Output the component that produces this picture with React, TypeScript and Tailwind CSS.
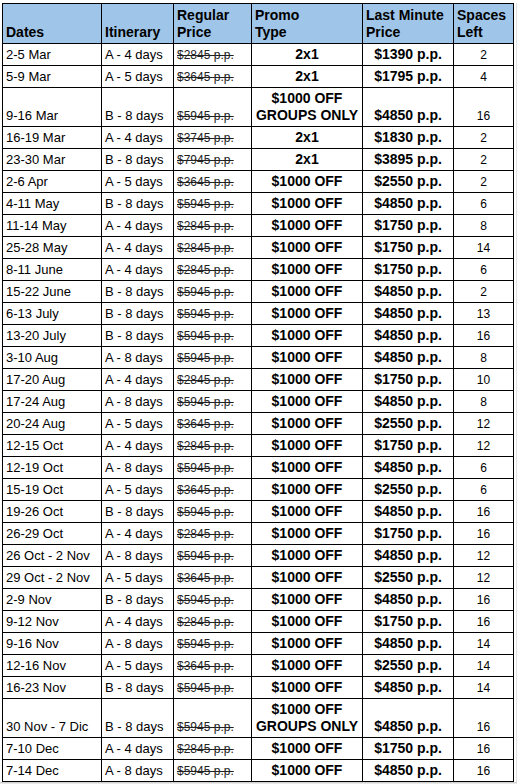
import React from "react";

type Row = {
  d: string;
  it: string;
  reg: string;
  promo: string;
  last: string;
  sp: string;
  tall?: boolean;
};

const rows: Row[] = [
  { d: "2-5 Mar", it: "A - 4 days", reg: "$2845 p.p.", promo: "2x1", last: "$1390 p.p.", sp: "2" },
  { d: "5-9 Mar", it: "A - 5 days", reg: "$3645 p.p.", promo: "2x1", last: "$1795 p.p.", sp: "4" },
  { d: "9-16 Mar", it: "B - 8 days", reg: "$5945 p.p.", promo: "GROUPS", last: "$4850 p.p.", sp: "16", tall: true },
  { d: "16-19 Mar", it: "A - 4 days", reg: "$3745 p.p.", promo: "2x1", last: "$1830 p.p.", sp: "2" },
  { d: "23-30 Mar", it: "B - 8 days", reg: "$7945 p.p.", promo: "2x1", last: "$3895 p.p.", sp: "2" },
  { d: "2-6 Apr", it: "A - 5 days", reg: "$3645 p.p.", promo: "$1000 OFF", last: "$2550 p.p.", sp: "2" },
  { d: "4-11 May", it: "B - 8 days", reg: "$5945 p.p.", promo: "$1000 OFF", last: "$4850 p.p.", sp: "6" },
  { d: "11-14 May", it: "A - 4 days", reg: "$2845 p.p.", promo: "$1000 OFF", last: "$1750 p.p.", sp: "8" },
  { d: "25-28 May", it: "A - 4 days", reg: "$2845 p.p.", promo: "$1000 OFF", last: "$1750 p.p.", sp: "14" },
  { d: "8-11 June", it: "A - 4 days", reg: "$2845 p.p.", promo: "$1000 OFF", last: "$1750 p.p.", sp: "6" },
  { d: "15-22 June", it: "B - 8 days", reg: "$5945 p.p.", promo: "$1000 OFF", last: "$4850 p.p.", sp: "2" },
  { d: "6-13 July", it: "B - 8 days", reg: "$5945 p.p.", promo: "$1000 OFF", last: "$4850 p.p.", sp: "13" },
  { d: "13-20 July", it: "B - 8 days", reg: "$5945 p.p.", promo: "$1000 OFF", last: "$4850 p.p.", sp: "16" },
  { d: "3-10 Aug", it: "A - 8 days", reg: "$5945 p.p.", promo: "$1000 OFF", last: "$4850 p.p.", sp: "8" },
  { d: "17-20 Aug", it: "A - 4 days", reg: "$2845 p.p.", promo: "$1000 OFF", last: "$1750 p.p.", sp: "10" },
  { d: "17-24 Aug", it: "A - 8 days", reg: "$5945 p.p.", promo: "$1000 OFF", last: "$4850 p.p.", sp: "8" },
  { d: "20-24 Aug", it: "A - 5 days", reg: "$3645 p.p.", promo: "$1000 OFF", last: "$2550 p.p.", sp: "12" },
  { d: "12-15 Oct", it: "A - 4 days", reg: "$2845 p.p.", promo: "$1000 OFF", last: "$1750 p.p.", sp: "12" },
  { d: "12-19 Oct", it: "A - 8 days", reg: "$5945 p.p.", promo: "$1000 OFF", last: "$4850 p.p.", sp: "6" },
  { d: "15-19 Oct", it: "A - 5 days", reg: "$3645 p.p.", promo: "$1000 OFF", last: "$2550 p.p.", sp: "6" },
  { d: "19-26 Oct", it: "B - 8 days", reg: "$5945 p.p.", promo: "$1000 OFF", last: "$4850 p.p.", sp: "16" },
  { d: "26-29 Oct", it: "A - 4 days", reg: "$2845 p.p.", promo: "$1000 OFF", last: "$1750 p.p.", sp: "16" },
  { d: "26 Oct - 2 Nov", it: "A - 8 days", reg: "$5945 p.p.", promo: "$1000 OFF", last: "$4850 p.p.", sp: "12" },
  { d: "29 Oct - 2 Nov", it: "A - 5 days", reg: "$3645 p.p.", promo: "$1000 OFF", last: "$2550 p.p.", sp: "12" },
  { d: "2-9 Nov", it: "B - 8 days", reg: "$5945 p.p.", promo: "$1000 OFF", last: "$4850 p.p.", sp: "16" },
  { d: "9-12 Nov", it: "A - 4 days", reg: "$2845 p.p.", promo: "$1000 OFF", last: "$1750 p.p.", sp: "16" },
  { d: "9-16 Nov", it: "A - 8 days", reg: "$5945 p.p.", promo: "$1000 OFF", last: "$4850 p.p.", sp: "14" },
  { d: "12-16 Nov", it: "A - 5 days", reg: "$3645 p.p.", promo: "$1000 OFF", last: "$2550 p.p.", sp: "14" },
  { d: "16-23 Nov", it: "B - 8 days", reg: "$5945 p.p.", promo: "$1000 OFF", last: "$4850 p.p.", sp: "14" },
  { d: "30 Nov - 7 Dic", it: "B - 8 days", reg: "$5945 p.p.", promo: "GROUPS", last: "$4850 p.p.", sp: "16", tall: true },
  { d: "7-10 Dec", it: "A - 4 days", reg: "$2845 p.p.", promo: "$1000 OFF", last: "$1750 p.p.", sp: "16" },
  { d: "7-14 Dec", it: "A - 8 days", reg: "$5945 p.p.", promo: "$1000 OFF", last: "$4850 p.p.", sp: "16" },
];

const td = "border border-black align-bottom p-0 pb-[2px] whitespace-nowrap overflow-hidden";

export default function App() {
  return (
    <div
      className="w-[517px] h-[784px] bg-white flex flex-col overflow-hidden"
      style={{ fontFamily: '"Liberation Sans", Arial, sans-serif' }}
    >
      <div className="flex-1 pt-[3px] pl-[2px] flex">
        <table className="table-fixed border-collapse w-[511px] text-black leading-[17px]">
          <colgroup>
            <col className="w-[99px]" />
            <col className="w-[72px]" />
            <col className="w-[78px]" />
            <col className="w-[111px]" />
            <col className="w-[91px]" />
            <col className="w-[60px]" />
          </colgroup>
          <thead>
            <tr className="h-[40px] bg-[#9fc5e8] text-[14px] font-bold">
              <th className={`${td} text-left pl-[3px] font-bold`}>Dates</th>
              <th className={`${td} text-left pl-[3px] font-bold`}>Itinerary</th>
              <th className={`${td} text-left pl-[3px] font-bold`}>
                Regular
                <br />
                Price
              </th>
              <th className={`${td} text-left pl-[3px] font-bold`}>
                Promo
                <br />
                Type
              </th>
              <th className={`${td} text-left pl-[3px] font-bold`}>
                Last Minute
                <br />
                Price
              </th>
              <th className={`${td} text-left pl-[3px] font-bold`}>
                Spaces
                <br />
                Left
              </th>
            </tr>
          </thead>
          <tbody>
            {rows.map((r, i) => (
              <tr key={i} className={r.tall ? "h-[39px]" : "h-[22px]"}>
                <td className={`${td} text-left pl-[3px] text-[13px] leading-[16px]`}>{r.d}</td>
                <td className={`${td} text-left pl-[3px] text-[13px] leading-[16px]`}>{r.it}</td>
                <td className={`${td} text-left pl-[3px] text-[12px] leading-[16px] text-[#222] line-through`}>
                  {r.reg}
                </td>
                <td className={`${td} text-center text-[14px] leading-[17px] font-bold`}>
                  {r.promo === "GROUPS" ? (
                    <>
                      $1000 OFF
                      <br />
                      GROUPS ONLY
                    </>
                  ) : (
                    r.promo
                  )}
                </td>
                <td className={`${td} text-center text-[14px] leading-[17px] font-bold`}>{r.last}</td>
                <td className={`${td} text-center text-[12px] leading-[15px]`}>{r.sp}</td>
              </tr>
            ))}
          </tbody>
        </table>
        <div className="flex-1 border-r border-[#e2e2e2]" />
      </div>
      <div className="h-[3px] bg-[#e8e8e8] border-t border-[#d0d0d0]" />
    </div>
  );
}
